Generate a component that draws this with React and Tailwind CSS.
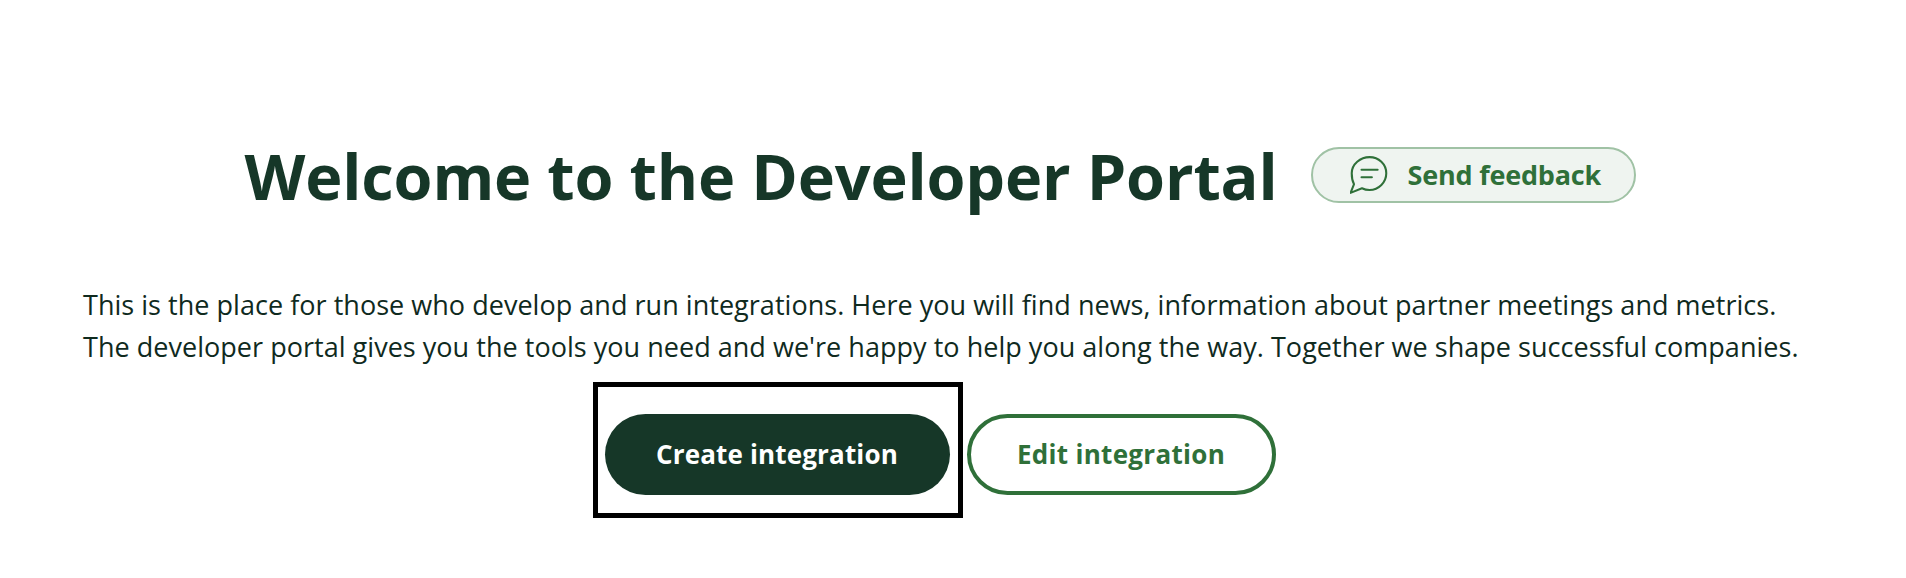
function FeedbackIcon() {
  return (
    <svg viewBox="2 1.500 33 33" fill="none" stroke="#2f7039" strokeWidth="1.800" strokeLinecap="round" strokeLinejoin="round" className="w-[38px] h-[38px] shrink-0">
      <path d="M19 2.500c8 0 14.500 6.200 14.500 14S27 31 19 31c-2.400 0-4.600-.5-6.600-1.500L2.500 33.500l3-7.500C4 23.300 3.500 20 3.500 16.500 3.500 8.700 11 2.500 19 2.500z" />
      <path d="M12 13.500h14M12 20h9" />
    </svg>
  );
}

export default function App() {
  return (
    <div className="min-h-[578px] bg-white pl-[83px] pr-[109px] pt-[136px] font-['Open_Sans','Noto_Sans',sans-serif]">
      <div className="flex items-center justify-center gap-[33px]">
        <h1 className="text-[63px] leading-[80px] font-bold text-[#163728] tracking-[-0.17px]">Welcome to the Developer Portal</h1>
        <button className="relative top-[-1px] flex items-center gap-[20px] h-[56px] w-[325px] pl-[37px] rounded-full border-2 border-[#a0c2a5] bg-[#eff4f0] text-[#2f7039] text-[27px] font-bold tracking-[-0.2px]">
          <FeedbackIcon />
          <span>Send feedback</span>
        </button>
      </div>
      <div className="mt-[68px] text-[27px] leading-[42px] text-[#0f2a1e] tracking-[0.03px] whitespace-nowrap">
        <p>This is the place for those who develop and run integrations. Here you will find news, information about partner meetings and metrics.</p>
        <p>The developer portal gives you the tools you need and we're happy to help you along the way. Together we shape successful companies.</p>
      </div>
      <div className="mt-[46px] flex justify-center gap-[17px]">
        <button className="relative w-[345px] h-[81px] rounded-full bg-[#163728] text-white text-[26px] font-bold tracking-[0.15px]">
          Create integration
          <span className="absolute left-[-12px] right-[-13px] top-[-32px] bottom-[-23px] border-[5px] border-black" />
        </button>
        <button className="w-[309px] h-[81px] rounded-full border-4 border-[#2f7039] bg-white text-[#2f7039] text-[26px] font-bold tracking-[0.3px]">
          Edit integration
        </button>
      </div>
    </div>
  );
}
